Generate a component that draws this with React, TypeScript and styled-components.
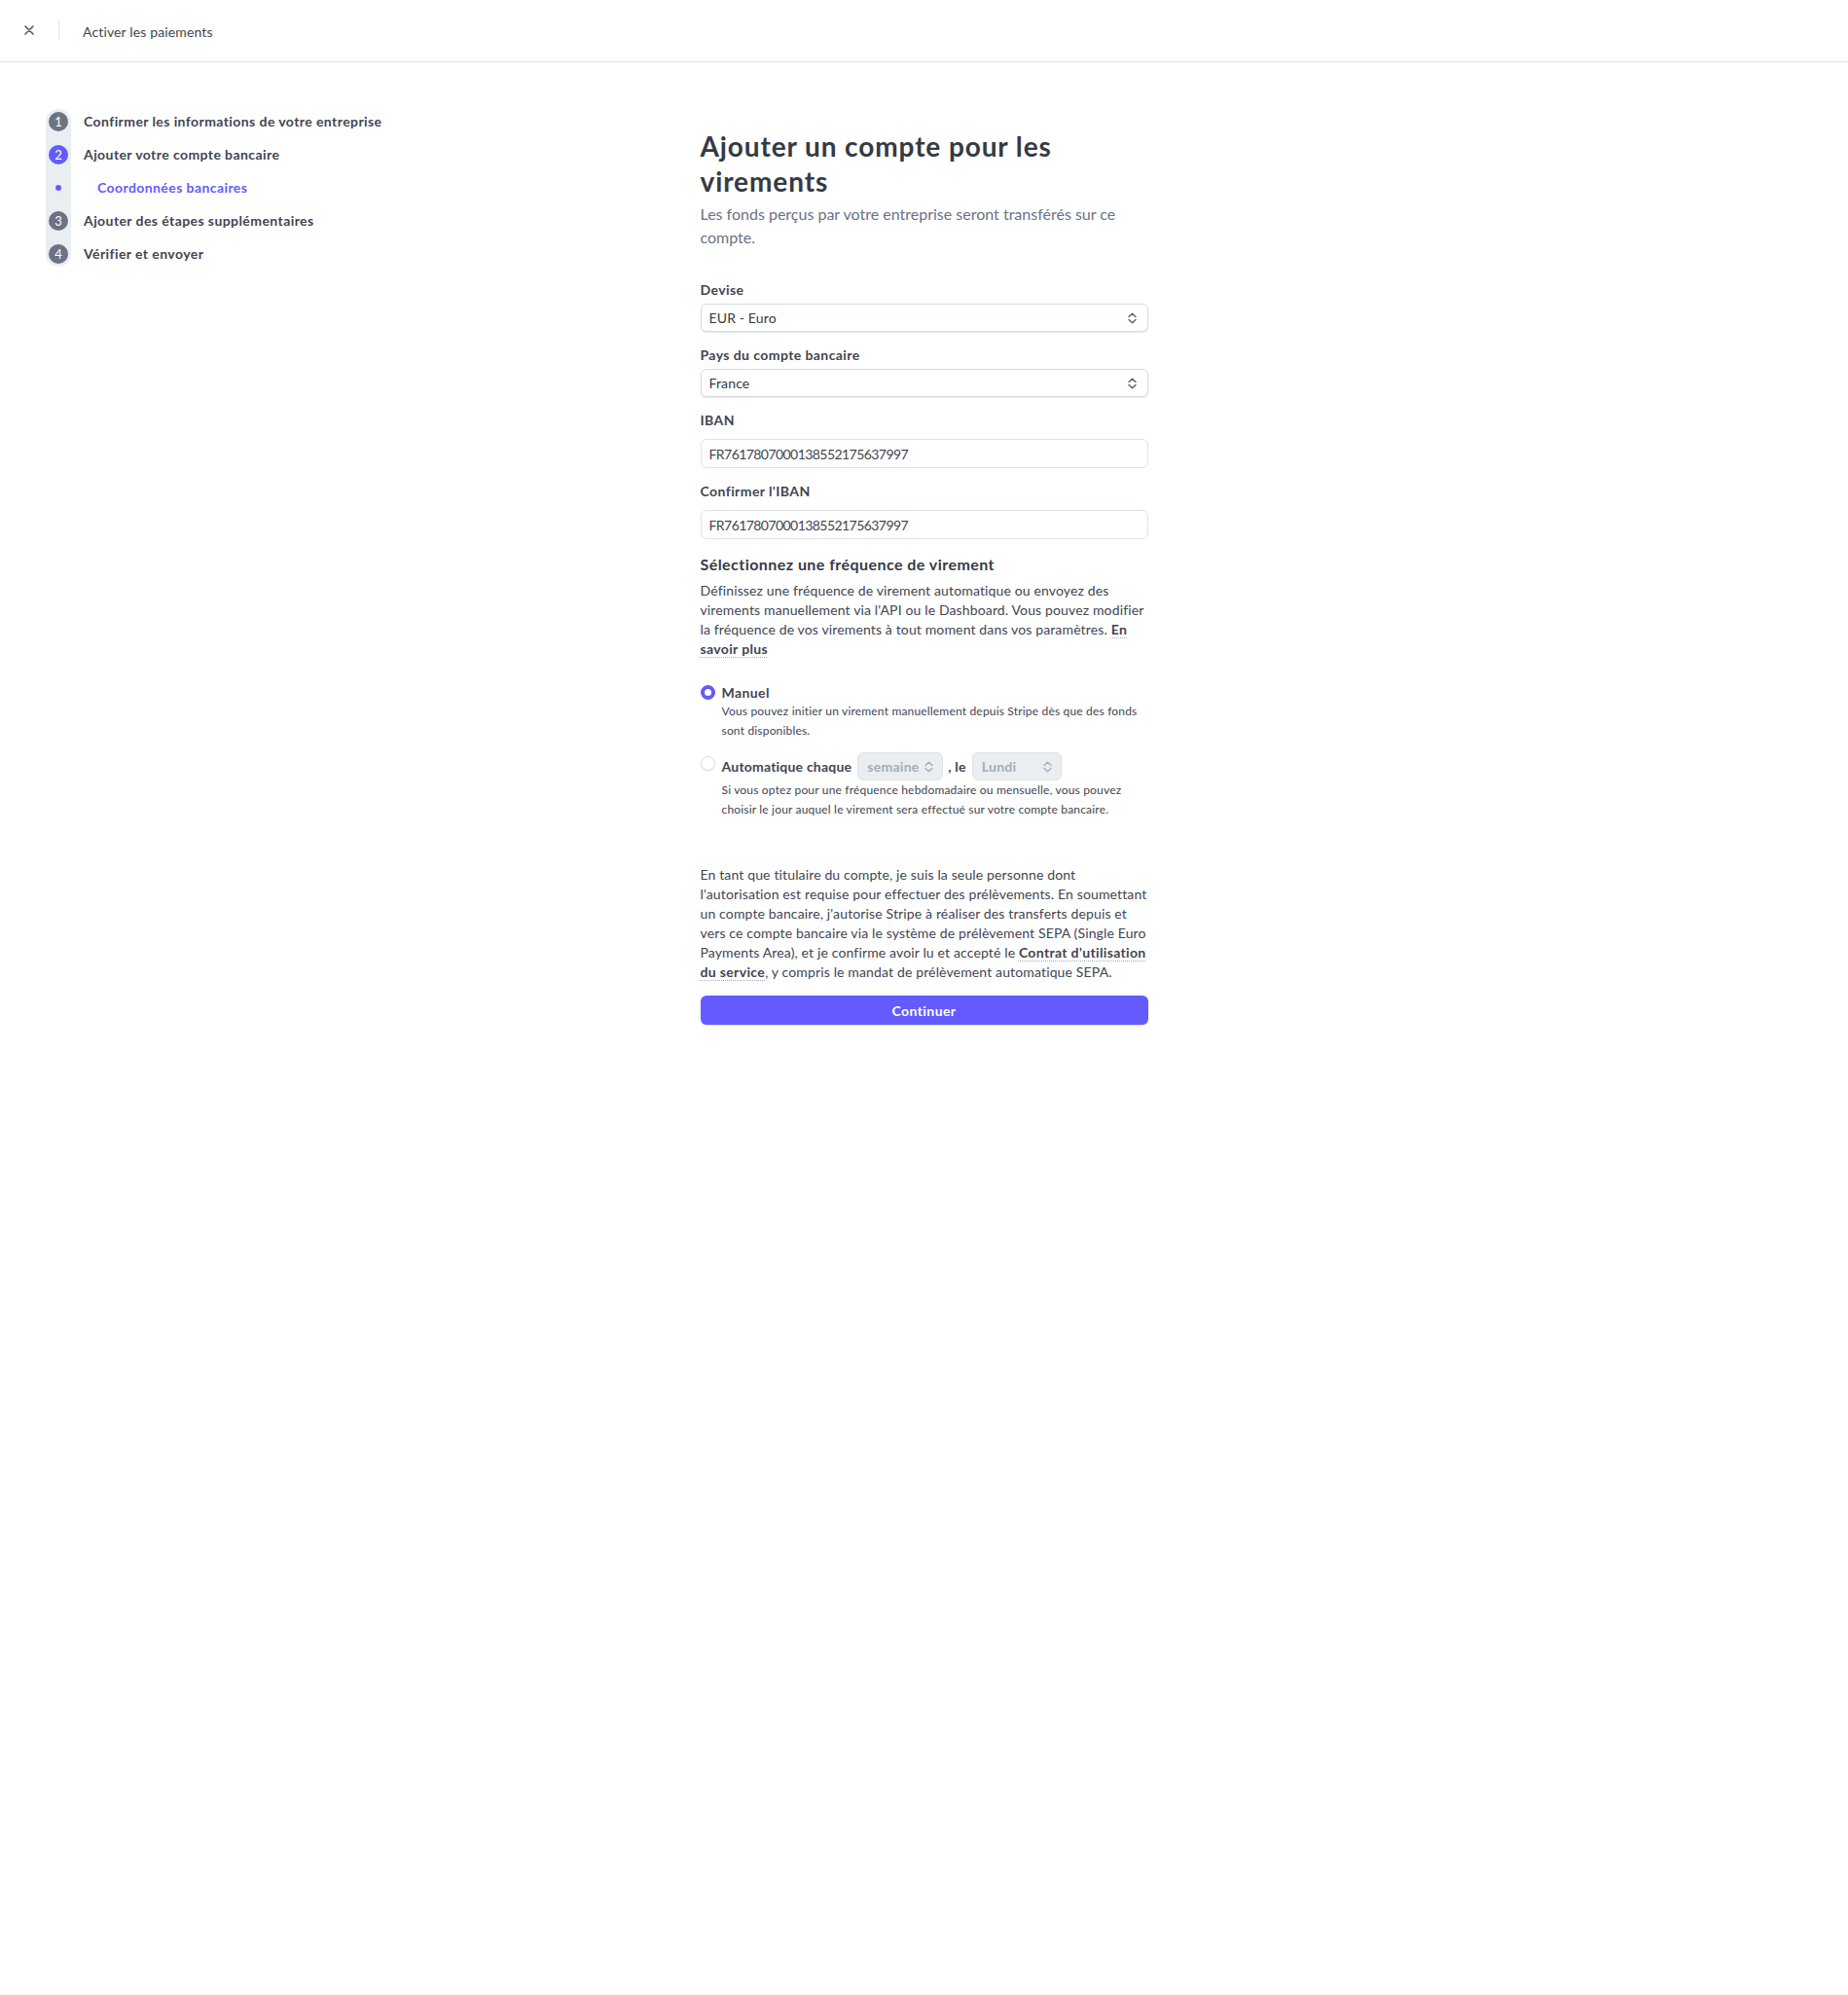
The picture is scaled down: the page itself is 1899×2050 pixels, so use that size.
import React from "react";
import styled, { createGlobalStyle } from "styled-components";

const GlobalStyle = createGlobalStyle`
  html, body { margin: 0; padding: 0; background: #ffffff; }
  body {
    font-family: Lato, "Noto Sans", "Liberation Sans", sans-serif;
    color: #414552;
    -webkit-font-smoothing: antialiased;
  }
  * { box-sizing: border-box; }
`;

const Page = styled.div`
  min-height: 2050px;
  background: #fff;
`;

const Header = styled.header`
  height: 64px;
  border-bottom: 1px solid #dfe3e8;
  display: flex;
  align-items: center;
  padding: 2px 0 0 25px;
`;

const CloseButton = styled.button`
  border: 0;
  background: transparent;
  padding: 0;
  width: 10px;
  height: 10px;
  display: flex;
  cursor: pointer;
  margin-top: -3px;
`;

const Divider = styled.div`
  width: 1px;
  height: 20px;
  background: #dfe3e8;
  margin: -3px 24px 0 25px;
`;

const HeaderTitle = styled.span`
  font-size: 14px;
  line-height: 20px;
  color: #414552;
  letter-spacing: 0.01em;
`;

const Body = styled.div`
  display: grid;
  grid-template-columns: 1fr 460px 1fr;
`;

const Nav = styled.nav`
  padding: 48px 0 0 47px;
`;

const NavList = styled.ol`
  list-style: none;
  margin: 0;
  padding: 0;
  position: relative;
  display: flex;
  flex-direction: column;
  gap: 8px;
  &::before {
    content: "";
    position: absolute;
    left: 0;
    top: 0;
    bottom: 0;
    width: 26px;
    border-radius: 13px;
    background: #ebeef1;
  }
`;

const NavItem = styled.li`
  position: relative;
  display: flex;
  align-items: center;
  height: 26px;
`;

const Marker = styled.span`
  width: 26px;
  height: 26px;
  display: flex;
  align-items: center;
  justify-content: center;
  flex-shrink: 0;
`;

const StepCircle = styled.span<{ $active?: boolean }>`
  width: 20px;
  height: 20px;
  border-radius: 50%;
  background: ${(p) => (p.$active ? "#635bff" : "#6c7385")};
  color: #fff;
  font-size: 13px;
  font-weight: 400;
  display: flex;
  align-items: center;
  justify-content: center;
  line-height: 1;
`;

const SubDot = styled.span`
  width: 6px;
  height: 6px;
  border-radius: 50%;
  background: #635bff;
`;

const StepLabel = styled.span<{ $sub?: boolean }>`
  margin-left: ${(p) => (p.$sub ? "27px" : "13px")};
  font-size: 14px;
  line-height: 20px;
  font-weight: 700;
  letter-spacing: 0.03em;
  color: ${(p) => (p.$sub ? "#635bff" : "#414552")};
  white-space: nowrap;
`;

const Main = styled.main`
  padding-top: 68px;
  padding-bottom: 80px;
`;

const Heading = styled.h1`
  margin: 0;
  font-size: 28px;
  line-height: 36px;
  font-weight: 700;
  letter-spacing: 0.032em;
  color: #353a44;
`;

const Subtitle = styled.p`
  margin: 4px 0 0;
  font-size: 16px;
  line-height: 24px;
  color: #687385;
`;

const Form = styled.form`
  margin-top: 32px;
  display: flex;
  flex-direction: column;
`;

const Field = styled.div<{ $gap: number }>`
  display: flex;
  flex-direction: column;
  gap: ${(p) => p.$gap}px;
  margin-bottom: 14px;
`;

const Label = styled.label`
  font-size: 14px;
  line-height: 20px;
  font-weight: 700;
  letter-spacing: 0.03em;
  color: #414552;
`;

const SelectBox = styled.div`
  height: 29px;
  border: 1px solid #d5dbe1;
  border-radius: 6px;
  box-shadow: 0 1px 1px rgba(64, 68, 82, 0.12);
  display: flex;
  align-items: center;
  justify-content: space-between;
  padding: 0 11px 0 8px;
  font-size: 14px;
  line-height: 20px;
  letter-spacing: 0.01em;
  color: #353a44;
  background: #fff;
`;

const Input = styled.input`
  height: 30px;
  border: 1px solid #dfe3e8;
  border-radius: 6px;
  padding: 0 8px;
  font-family: inherit;
  font-size: 14px;
  letter-spacing: -0.04em;
  color: #414552;
  background: #fff;
  outline: none;
`;

const SectionTitle = styled.h2`
  margin: 0;
  font-size: 16px;
  line-height: 24px;
  font-weight: 700;
  letter-spacing: 0.028em;
  color: #353a44;
`;

const Paragraph = styled.p<{ $top: number }>`
  margin: ${(p) => p.$top}px 0 0;
  font-size: 14px;
  line-height: 20px;
  letter-spacing: 0.01em;
  color: #414552;
`;

const Link = styled.a`
  color: #414552;
  font-weight: 700;
  letter-spacing: 0.025em;
  text-decoration: underline dotted;
  text-decoration-color: #a3acba;
  text-underline-offset: 3px;
  text-decoration-thickness: 1px;
`;

const RadioGroup = styled.div`
  margin-top: 25px;
  display: flex;
  flex-direction: column;
`;

const RadioRow = styled.div<{ $gap?: number }>`
  display: flex;
  align-items: flex-start;
  gap: 7px;
  margin-top: ${(p) => p.$gap ?? 0}px;
`;

const Radio = styled.span<{ $checked?: boolean; $top: number }>`
  width: 15px;
  height: 15px;
  border-radius: 50%;
  flex-shrink: 0;
  margin-top: ${(p) => p.$top}px;
  background: #fff;
  border: ${(p) => (p.$checked ? "4.5px solid #635bff" : "1px solid #d5dbe1")};
  box-shadow: ${(p) => (p.$checked ? "none" : "0 1px 1px rgba(64,68,82,0.08)")};
`;

const RadioContent = styled.div`
  display: flex;
  flex-direction: column;
`;

const RadioLabel = styled.div`
  font-size: 14px;
  line-height: 20px;
  font-weight: 700;
  letter-spacing: 0.03em;
  color: #414552;
  white-space: nowrap;
`;

const AutoLine = styled.div`
  display: flex;
  align-items: center;
  height: 29px;
  font-size: 14px;
  font-weight: 700;
  letter-spacing: 0.015em;
  color: #414552;
  white-space: nowrap;
`;

const Help = styled.div<{ $top?: number }>`
  margin-top: ${(p) => p.$top ?? 0}px;
  font-size: 12px;
  line-height: 20px;
  letter-spacing: 0.015em;
  color: #414552;
`;

const MiniSelect = styled.div<{ $w: number }>`
  width: ${(p) => p.$w}px;
  height: 29px;
  border: 1px solid #dfe3e8;
  border-radius: 6px;
  background: #ebeef1;
  color: #a3acba;
  font-size: 14px;
  font-weight: 700;
  letter-spacing: 0.02em;
  display: flex;
  align-items: center;
  justify-content: space-between;
  padding: 0 9px;
  margin: 0 5px 0 6px;
`;

const Button = styled.button`
  margin-top: 14px;
  height: 30px;
  width: 100%;
  border: 0;
  border-radius: 6px;
  background: #635bff;
  color: #fff;
  font-family: inherit;
  font-size: 14px;
  font-weight: 700;
  letter-spacing: 0.03em;
  cursor: pointer;
  box-shadow: 0 1px 1px rgba(0, 0, 0, 0.12);
`;

const Chevrons = ({ color = "#545969" }: { color?: string }) => (
  <svg width="9" height="12" viewBox="0 0 9 12" fill="none">
    <path d="M1 4.5L4.5 1.2L8 4.5" stroke={color} strokeWidth="1.3" strokeLinecap="round" strokeLinejoin="round" />
    <path d="M1 7.5L4.5 10.8L8 7.5" stroke={color} strokeWidth="1.3" strokeLinecap="round" strokeLinejoin="round" />
  </svg>
);

const steps = [
  { n: "1", label: "Confirmer les informations de votre entreprise" },
  { n: "2", label: "Ajouter votre compte bancaire", active: true },
  { sub: true, label: "Coordonnées bancaires" },
  { n: "3", label: "Ajouter des étapes supplémentaires" },
  { n: "4", label: "Vérifier et envoyer" },
];

export default function App() {
  return (
    <Page>
      <GlobalStyle />
      <Header>
        <CloseButton aria-label="Fermer">
          <svg width="10" height="10" viewBox="0 0 10 10">
            <path d="M1 1L9 9M9 1L1 9" stroke="#545969" strokeWidth="1.6" strokeLinecap="round" />
          </svg>
        </CloseButton>
        <Divider />
        <HeaderTitle>Activer les paiements</HeaderTitle>
      </Header>
      <Body>
        <Nav>
          <NavList>
            {steps.map((s, i) => (
              <NavItem key={i}>
                <Marker>{s.sub ? <SubDot /> : <StepCircle $active={s.active}>{s.n}</StepCircle>}</Marker>
                <StepLabel $sub={s.sub}>{s.label}</StepLabel>
              </NavItem>
            ))}
          </NavList>
        </Nav>
        <Main>
          <Heading>Ajouter un compte pour les virements</Heading>
          <Subtitle>Les fonds perçus par votre entreprise seront transférés sur ce compte.</Subtitle>
          <Form onSubmit={(e) => e.preventDefault()}>
            <Field $gap={4}>
              <Label>Devise</Label>
              <SelectBox>
                <span>EUR - Euro</span>
                <Chevrons />
              </SelectBox>
            </Field>
            <Field $gap={4}>
              <Label>Pays du compte bancaire</Label>
              <SelectBox>
                <span>France</span>
                <Chevrons />
              </SelectBox>
            </Field>
            <Field $gap={9}>
              <Label>IBAN</Label>
              <Input defaultValue="FR7617807000138552175637997" />
            </Field>
            <Field $gap={9}>
              <Label>Confirmer l'IBAN</Label>
              <Input defaultValue="FR7617807000138552175637997" />
            </Field>
            <SectionTitle>Sélectionnez une fréquence de virement</SectionTitle>
            <Paragraph $top={5}>
              Définissez une fréquence de virement automatique ou envoyez des virements manuellement via l'API ou le
              Dashboard. Vous pouvez modifier la fréquence de vos virements à tout moment dans vos paramètres.{" "}
              <Link href="#">En savoir plus</Link>
            </Paragraph>
            <RadioGroup>
              <RadioRow>
                <Radio $checked $top={2} />
                <RadioContent>
                  <RadioLabel>Manuel</RadioLabel>
                  <Help $top={-1}>
                    Vous pouvez initier un virement manuellement depuis Stripe dès que des fonds sont disponibles.
                  </Help>
                </RadioContent>
              </RadioRow>
              <RadioRow $gap={12}>
                <Radio $top={4} />
                <RadioContent>
                  <AutoLine>
                    Automatique chaque
                    <MiniSelect $w={88}>
                      <span>semaine</span>
                      <Chevrons color="#a3acba" />
                    </MiniSelect>
                    , le
                    <MiniSelect $w={92}>
                      <span>Lundi</span>
                      <Chevrons color="#a3acba" />
                    </MiniSelect>
                  </AutoLine>
                  <Help>
                    Si vous optez pour une fréquence hebdomadaire ou mensuelle, vous pouvez choisir le jour auquel le
                    virement sera effectué sur votre compte bancaire.
                  </Help>
                </RadioContent>
              </RadioRow>
            </RadioGroup>
            <Paragraph $top={47}>
              En tant que titulaire du compte, je suis la seule personne dont l'autorisation est requise pour effectuer
              des prélèvements. En soumettant un compte bancaire, j'autorise Stripe à réaliser des transferts depuis et
              vers ce compte bancaire via le système de prélèvement SEPA (Single Euro Payments Area), et je confirme avoir
              lu et accepté le <Link href="#">Contrat d'utilisation du service</Link>, y compris le mandat de prélèvement
              automatique SEPA.
            </Paragraph>
            <Button type="submit">Continuer</Button>
          </Form>
        </Main>
        <div />
      </Body>
    </Page>
  );
}
